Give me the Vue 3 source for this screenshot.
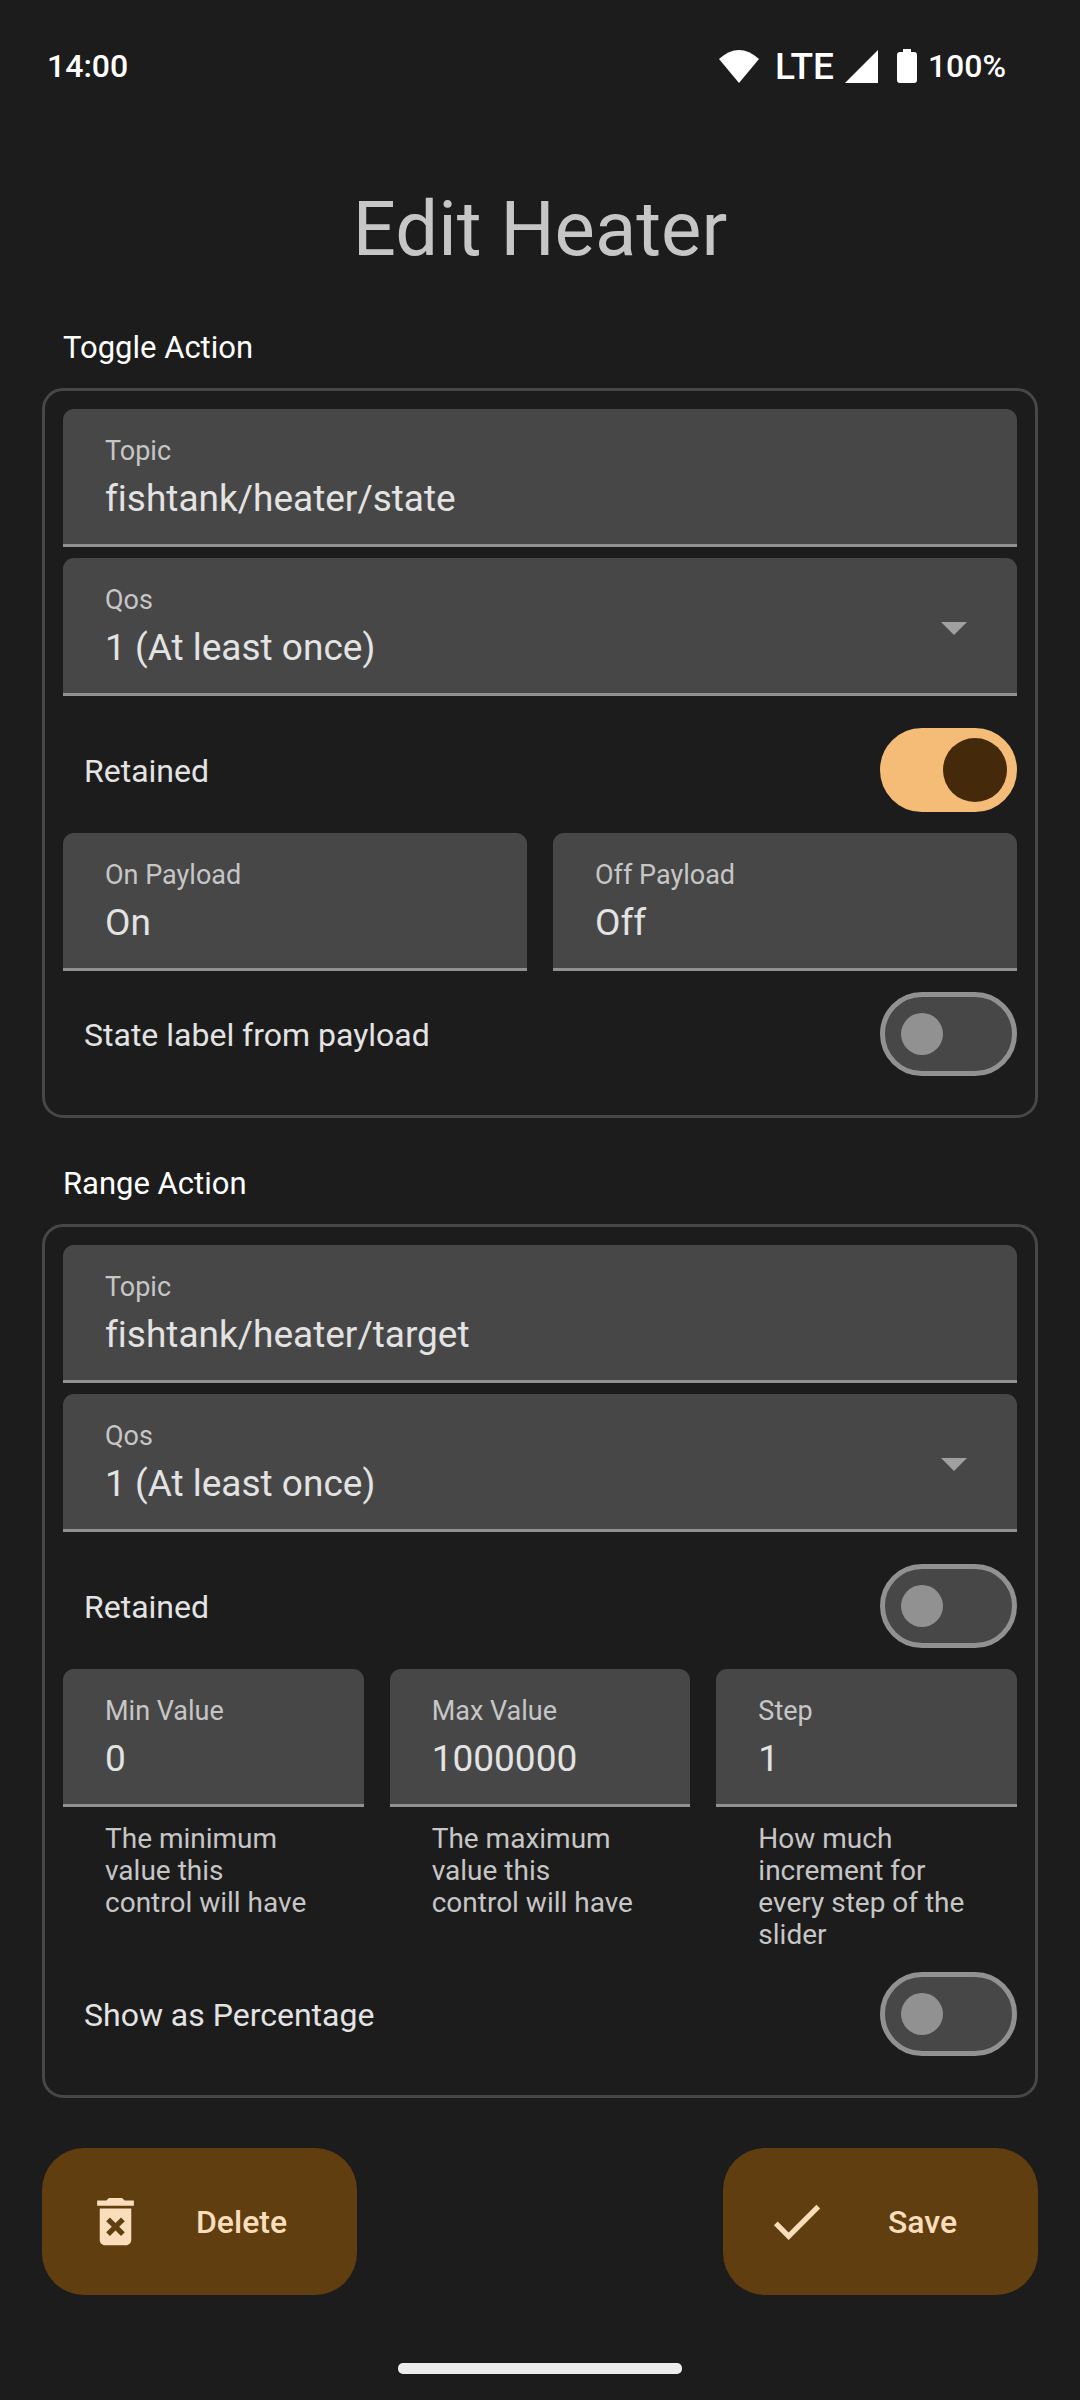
<script setup>
import { reactive } from 'vue'

const qosOptions = ['0 (At most once)', '1 (At least once)', '2 (Exactly once)']

const toggle = reactive({
  topic: 'fishtank/heater/state',
  qos: qosOptions[1],
  retained: true,
  on: 'On',
  off: 'Off',
  labelFromPayload: false
})

const range = reactive({
  topic: 'fishtank/heater/target',
  qos: qosOptions[1],
  retained: false,
  min: '0',
  max: '1000000',
  step: '1',
  percentage: false
})

const limits = [
  { key: 'min', label: 'Min Value', hint: 'The minimum\nvalue this\ncontrol will have' },
  { key: 'max', label: 'Max Value', hint: 'The maximum\nvalue this\ncontrol will have' },
  { key: 'step', label: 'Step', hint: 'How much\nincrement for\nevery step of the\nslider' }
]
</script>

<template>
  <div class="screen">
    <header class="status">
      <span class="clock">14:00</span>
      <div class="indicators">
        <svg class="wifi" viewBox="0 0 40 33" aria-hidden="true"><path d="M0 9Q20-9 40 9L20 33Z" /></svg>
        <span class="network">LTE</span>
        <svg class="signal" viewBox="0 0 33 33" aria-hidden="true"><path d="M33 0V33H0Z" /></svg>
        <svg class="battery" viewBox="0 0 20 34" aria-hidden="true">
          <path d="M6 0H14V3H17Q20 3 20 6V31Q20 34 17 34H3Q0 34 0 31V6Q0 3 3 3H6Z" />
        </svg>
        <span class="level">100%</span>
      </div>
    </header>

    <form class="form" @submit.prevent>
      <h1>Edit Heater</h1>

      <section aria-labelledby="toggle-heading">
        <h2 id="toggle-heading">Toggle Action</h2>
        <div class="card">
          <div class="field">
            <label for="toggle-topic">Topic</label>
            <input id="toggle-topic" v-model="toggle.topic" type="text" spellcheck="false" />
          </div>
          <div class="field">
            <label for="toggle-qos">Qos</label>
            <select id="toggle-qos" v-model="toggle.qos">
              <option v-for="option in qosOptions" :key="option">{{ option }}</option>
            </select>
            <svg class="caret" viewBox="0 0 26 13" aria-hidden="true"><path d="M0 0H26L13 13Z" /></svg>
          </div>
          <div class="setting spaced">
            <label for="toggle-retained">Retained</label>
            <input id="toggle-retained" v-model="toggle.retained" class="switch" type="checkbox" role="switch" />
          </div>
          <div class="columns">
            <div class="field">
              <label for="on-payload">On Payload</label>
              <input id="on-payload" v-model="toggle.on" type="text" />
            </div>
            <div class="field">
              <label for="off-payload">Off Payload</label>
              <input id="off-payload" v-model="toggle.off" type="text" />
            </div>
          </div>
          <div class="setting">
            <label for="state-label">State label from payload</label>
            <input id="state-label" v-model="toggle.labelFromPayload" class="switch" type="checkbox" role="switch" />
          </div>
        </div>
      </section>

      <section aria-labelledby="range-heading">
        <h2 id="range-heading">Range Action</h2>
        <div class="card">
          <div class="field">
            <label for="range-topic">Topic</label>
            <input id="range-topic" v-model="range.topic" type="text" spellcheck="false" />
          </div>
          <div class="field">
            <label for="range-qos">Qos</label>
            <select id="range-qos" v-model="range.qos">
              <option v-for="option in qosOptions" :key="option">{{ option }}</option>
            </select>
            <svg class="caret" viewBox="0 0 26 13" aria-hidden="true"><path d="M0 0H26L13 13Z" /></svg>
          </div>
          <div class="setting spaced">
            <label for="range-retained">Retained</label>
            <input id="range-retained" v-model="range.retained" class="switch" type="checkbox" role="switch" />
          </div>
          <div class="columns">
            <div v-for="limit in limits" :key="limit.key">
              <div class="field">
                <label :for="limit.key">{{ limit.label }}</label>
                <input
                  :id="limit.key"
                  v-model="range[limit.key]"
                  type="text"
                  inputmode="numeric"
                  :aria-describedby="limit.key + '-hint'"
                />
              </div>
              <p :id="limit.key + '-hint'" class="hint">{{ limit.hint }}</p>
            </div>
          </div>
          <div class="setting">
            <label for="percentage">Show as Percentage</label>
            <input id="percentage" v-model="range.percentage" class="switch" type="checkbox" role="switch" />
          </div>
        </div>
      </section>

      <div class="actions">
        <button type="button">
          <svg viewBox="0 0 24 24" aria-hidden="true">
            <path d="M6 19c0 1.1.9 2 2 2h8c1.1 0 2-.9 2-2V7H6v12zm2.46-7.12 1.41-1.41L12 12.59l2.12-2.12 1.41 1.41L13.41 14l2.12 2.12-1.41 1.41L12 15.41l-2.12 2.12-1.41-1.41L10.59 14zM15.5 4l-1-1h-5l-1 1H5v2h14V4z" />
          </svg>
          <span>Delete</span>
        </button>
        <button type="submit">
          <svg viewBox="0 0 24 24" aria-hidden="true">
            <path d="M9 16.17 4.83 12l-1.42 1.41L9 19 21 7l-1.41-1.41z" />
          </svg>
          <span>Save</span>
        </button>
      </div>
    </form>

    <div class="gesture"></div>
  </div>
</template>

<style>
body {
  margin: 0;
  background: #1c1c1c;
}
</style>

<style scoped>
* {
  box-sizing: border-box;
}

.screen {
  display: flex;
  flex-direction: column;
  min-height: 100vh;
  background: #1c1c1c;
  color: #e3e3e3;
  font-family: Roboto, "Liberation Sans", sans-serif;
  font-variant-ligatures: none;
}

.status {
  display: flex;
  align-items: center;
  justify-content: space-between;
  height: 132px;
  padding: 0 74px 0 47px;
  color: #fff;
  font-size: 32px;
  font-weight: 500;
}

.indicators {
  display: flex;
  align-items: center;
}

.indicators svg {
  fill: currentColor;
}

.wifi {
  width: 40px;
  height: 33px;
  margin-right: 16px;
}

.network {
  margin-right: 11px;
  font-size: 37px;
}

.signal {
  width: 33px;
  height: 33px;
  margin-right: 19px;
}

.battery {
  width: 20px;
  height: 34px;
  margin-right: 11px;
}

.form {
  padding: 52px 42px 0;
}

h1 {
  margin: 0 0 55px;
  color: #c6c6c6;
  font-size: 76px;
  font-weight: 400;
  line-height: 90px;
  text-align: center;
}

h2 {
  margin: 0 0 22px;
  padding-left: 21px;
  color: #fff;
  font-size: 31px;
  font-weight: 400;
  line-height: 37px;
}

section + section {
  margin-top: 47px;
}

.card {
  padding: 18px;
  border: 3px solid #474747;
  border-radius: 21px;
}

.field {
  position: relative;
  display: flex;
  flex-direction: column;
  gap: 11px;
  padding: 26px 42px 24px;
  border-bottom: 3px solid #919191;
  border-radius: 11px 11px 0 0;
  background: #474747;
}

.card > .field + .field {
  margin-top: 11px;
}

.field label {
  color: #c6c6c6;
  font-size: 27px;
  line-height: 32px;
}

.field input,
.field select {
  width: 100%;
  height: 42px;
  margin: 0;
  padding: 0;
  border: 0;
  outline: 0;
  appearance: none;
  background: transparent;
  color: #e3e3e3;
  font-family: inherit;
  font-size: 37px;
  font-variant-ligatures: none;
  line-height: 42px;
}

.field option {
  background: #474747;
}

.caret {
  position: absolute;
  top: 64px;
  right: 50px;
  width: 26px;
  height: 13px;
  fill: #a0a0a0;
  pointer-events: none;
}

.columns {
  display: flex;
  gap: 26px;
}

.columns > * {
  flex: 1 1 0;
  min-width: 0;
}

.hint {
  margin: 16px 0 0;
  padding-left: 42px;
  color: #c6c6c6;
  font-size: 28px;
  line-height: 32px;
  white-space: pre-line;
}

.setting {
  display: flex;
  align-items: center;
  justify-content: space-between;
  padding: 21px 0 21px 21px;
  font-size: 32px;
  line-height: 38px;
}

.setting label {
  padding-top: 2px;
}

.spaced {
  margin-top: 11px;
}

.switch {
  position: relative;
  flex: none;
  width: 137px;
  height: 84px;
  margin: 0;
  border: 5px solid #919191;
  border-radius: 42px;
  appearance: none;
  background: #474747;
}

.switch::before {
  content: "";
  position: absolute;
  top: 16px;
  left: 16px;
  width: 42px;
  height: 42px;
  border-radius: 50%;
  background: #919191;
}

.switch:checked {
  border-color: #f4bc77;
  background: #f4bc77;
}

.switch:checked::before {
  top: 5px;
  left: 58px;
  width: 64px;
  height: 64px;
  background: #44290a;
}

.actions {
  display: flex;
  justify-content: space-between;
  margin-top: 50px;
}

button {
  display: flex;
  align-items: center;
  width: 315px;
  height: 147px;
  padding: 0 21px 0 42px;
  border: 0;
  border-radius: 42px;
  background: #603e10;
  color: #fadebc;
  font-family: inherit;
  font-size: 32px;
  font-weight: 500;
}

button svg {
  flex: none;
  width: 63px;
  height: 63px;
  fill: currentColor;
}

button span {
  flex: 1;
  text-align: center;
}

.gesture {
  width: 284px;
  height: 11px;
  margin: 68px auto 26px;
  border-radius: 5px;
  background: #ececec;
}
</style>
